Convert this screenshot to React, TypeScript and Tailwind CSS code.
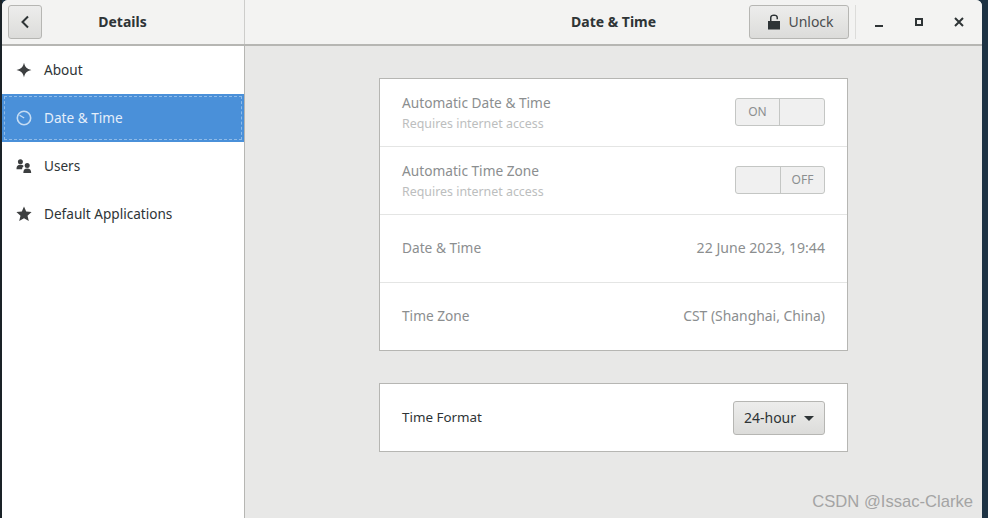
import React from "react";

const icons = {
  about: (
    <svg width="16" height="16" viewBox="0 0 16 16" fill="#3d3f40">
      <path d="M8 0.5 C8.8 4.8 10.6 6.9 15.5 8 C10.6 9.1 8.8 11.2 8 15.5 C7.2 11.2 5.4 9.1 0.5 8 C5.4 6.9 7.2 4.8 8 0.5 Z" />
    </svg>
  ),
  clock: (
    <svg width="16" height="16" viewBox="0 0 16 16" fill="none" stroke="#c5dcf3" strokeWidth="1.6">
      <circle cx="8" cy="8" r="6.7" />
      <path d="M3.6 5.2 L8.2 8" strokeWidth="1.3" />
    </svg>
  ),
  users: (
    <svg width="16" height="16" viewBox="0 0 16 16" fill="#3d3f40">
      <circle cx="4.4" cy="3.8" r="2.5" />
      <path d="M0.5 11.2 C0.5 7.8 2 6.8 4.4 6.8 C6 6.8 7 7.2 7.7 8 C6.7 8.8 6.2 9.8 6.1 11.2 Z" />
      <circle cx="11.2" cy="7.4" r="2.5" />
      <path d="M7.3 15 C7.3 11.6 8.6 10.4 11.2 10.4 C13.8 10.4 15.2 11.6 15.2 15 Z" />
    </svg>
  ),
  star: (
    <svg width="16" height="16" viewBox="0 0 16 16" fill="#3d3f40">
      <path d="M8 0.6 L10.2 5.6 L15.6 6.1 L11.5 9.7 L12.8 15 L8 12.2 L3.2 15 L4.5 9.7 L0.4 6.1 L5.8 5.6 Z" />
    </svg>
  ),
};

const SidebarRow = ({ icon, label, active }: { icon: React.ReactNode; label: string; active?: boolean }) => (
  <div className={active ? "h-12 bg-[#4a90d9] p-[2px] text-[#e4eefa]" : "h-12 text-[#2e3436]"}>
    <div
      className={
        active
          ? "flex h-full items-center gap-[12px] border border-dashed border-[#8fbbe8] pl-[11px]"
          : "flex h-full items-center gap-[12px] pl-[14px]"
      }
    >
      <span className="flex h-4 w-4 items-center justify-center">{icon}</span>
      <span className="text-[13.6px]">{label}</span>
    </div>
  </div>
);

const Toggle = ({ on }: { on: boolean }) => (
  <div className="flex h-7 w-[90px] rounded-[3px] border border-[#c4c6c4] bg-[#f0f0f0] text-xs text-[#8b8e8f]">
    <div className={on ? "flex w-[44px] items-center justify-center border-r border-[#c4c6c4]" : "w-[45px] border-r border-[#c4c6c4]"}>
      {on ? "ON" : ""}
    </div>
    <div className="flex flex-1 items-center justify-center">{on ? "" : "OFF"}</div>
  </div>
);

const SettingRow = ({
  title,
  sub,
  right,
  last,
}: {
  title: string;
  sub?: string;
  right: React.ReactNode;
  last?: boolean;
}) => (
  <div className={`flex items-center justify-between px-[22px] ${last ? "h-[67px] pb-px" : "h-[68px] border-b border-[#e4e5e4] pb-px"}`}>
    <div className={`flex flex-col text-[13.7px] ${sub ? "pt-[3px]" : ""}`}>
      <span className="text-[#8b8e8f]">{title}</span>
      {sub && <span className="mt-[3px] text-[12.4px] text-[#bcbebe]">{sub}</span>}
    </div>
    {right}
  </div>
);

export default function App() {
  return (
    <div className="relative flex h-[518px] w-[988px] overflow-hidden bg-[#1d3344] text-[14px] leading-[18px] [font-family:'Noto_Sans',sans-serif]">
      <div className="w-[2px] bg-[#1a2227]" />
      <div className="flex h-full w-[980px] flex-col overflow-hidden rounded-t-[6px] bg-[#e8e8e7]">
        {/* header */}
        <div className="flex h-[46px] shrink-0 border-b-2 border-[#b6b6b3] bg-[#f3f3f2]">
          <div className="flex w-[243px] items-center border-r border-[#cdcdcb] pl-[6px]">
            <button className="flex h-[34px] w-[34px] items-center justify-center rounded-[3px] border border-[#b6b6b3] bg-gradient-to-b from-[#ededec] to-[#dcdcda]">
              <svg width="10" height="14" viewBox="0 0 10 14" fill="none" stroke="#2e3436" strokeWidth="2">
                <path d="M8 1.5 L2.5 7 L8 12.5" />
              </svg>
            </button>
            <span className="flex-1 pr-[41px] text-center font-bold text-[#2e3436]">Details</span>
          </div>
          <div className="relative flex flex-1 items-center justify-end">
            <span className="absolute left-[326px] font-bold text-[#2e3436]">Date &amp; Time</span>
            <button className="flex h-[34px] w-[100px] items-center justify-center gap-[8px] rounded-[3px] border border-[#b6b6b3] bg-gradient-to-b from-[#ededec] to-[#dcdcda] pl-[4px] text-[#4a4d4e]">
              <svg width="12" height="16" viewBox="0 0 12 16" fill="#2e3436">
                <path d="M2 6 V3.8 C2 1.5 3.6 0.5 6 0.5 C8.4 0.5 10 1.5 10 3.8 V5.2 H8.5 V3.8 C8.5 2.4 7.6 2 6 2 C4.4 2 3.5 2.4 3.5 3.8 V7 H2 Z" />
                <rect x="0" y="7" width="12" height="8.5" />
              </svg>
              Unlock
            </button>
            <div className="ml-[6px] mr-[5px] h-[34px] w-px bg-[#dcdcda]" />
            <div className="mr-px flex w-[120px] items-center justify-between pl-[10px] pr-[14px]">
              <span className="flex h-4 w-4 items-center justify-center">
                <span className="mt-[8px] h-[2px] w-2 bg-[#2e3436]" />
              </span>
              <span className="flex h-4 w-4 items-center justify-center">
                <span className="h-2 w-2 border-2 border-[#2e3436]" />
              </span>
              <span className="flex h-4 w-4 items-center justify-center">
                <svg width="10" height="10" viewBox="0 0 10 10" stroke="#2e3436" strokeWidth="2">
                  <path d="M1 1 L9 9 M9 1 L1 9" />
                </svg>
              </span>
            </div>
          </div>
        </div>

        <div className="flex flex-1">
          {/* sidebar */}
          <div className="w-[243px] shrink-0 border-r border-[#b6b6b3] bg-white">
            <SidebarRow icon={icons.about} label="About" />
            <SidebarRow icon={icons.clock} label="Date & Time" active />
            <SidebarRow icon={icons.users} label="Users" />
            <SidebarRow icon={icons.star} label="Default Applications" />
          </div>

          {/* content */}
          <div className="flex flex-1 flex-col gap-[32px] pl-[134px] pt-[32px]">
            <div className="w-[469px] border border-[#b6b6b3] bg-white">
              <SettingRow title="Automatic Date & Time" sub="Requires internet access" right={<Toggle on />} />
              <SettingRow title="Automatic Time Zone" sub="Requires internet access" right={<Toggle on={false} />} />
              <SettingRow title="Date & Time" right={<span className="text-[14.1px] text-[#8b8e8f]">22 June 2023, 19:44</span>} />
              <SettingRow title="Time Zone" right={<span className="text-[13.9px] text-[#8b8e8f]">CST (Shanghai, China)</span>} last />
            </div>
            <div className="w-[469px] border border-[#b6b6b3] bg-white">
              <div className="flex h-[67px] items-center justify-between px-[22px] text-[#2e3436]">
                <span className="-mt-px text-[13.4px]">Time Format</span>
                <button className="flex h-[34px] w-[92px] items-center justify-center gap-[8px] rounded-[3px] border border-[#b6b6b3] bg-gradient-to-b from-[#ededec] to-[#dcdcda] text-[#2e3436]">
                  24-hour
                  <span className="mt-[1px] h-0 w-0 border-x-[5px] border-t-[5px] border-x-transparent border-t-[#2e3436]" />
                </button>
              </div>
            </div>
          </div>
        </div>
      </div>
      <div className="w-[6px] bg-[#1d3344]" />
      <span className="absolute bottom-[7px] right-[15px] text-[16.6px] text-[#a4a4a4] [font-family:'Liberation_Sans',sans-serif]">
        CSDN @Issac-Clarke
      </span>
    </div>
  );
}
